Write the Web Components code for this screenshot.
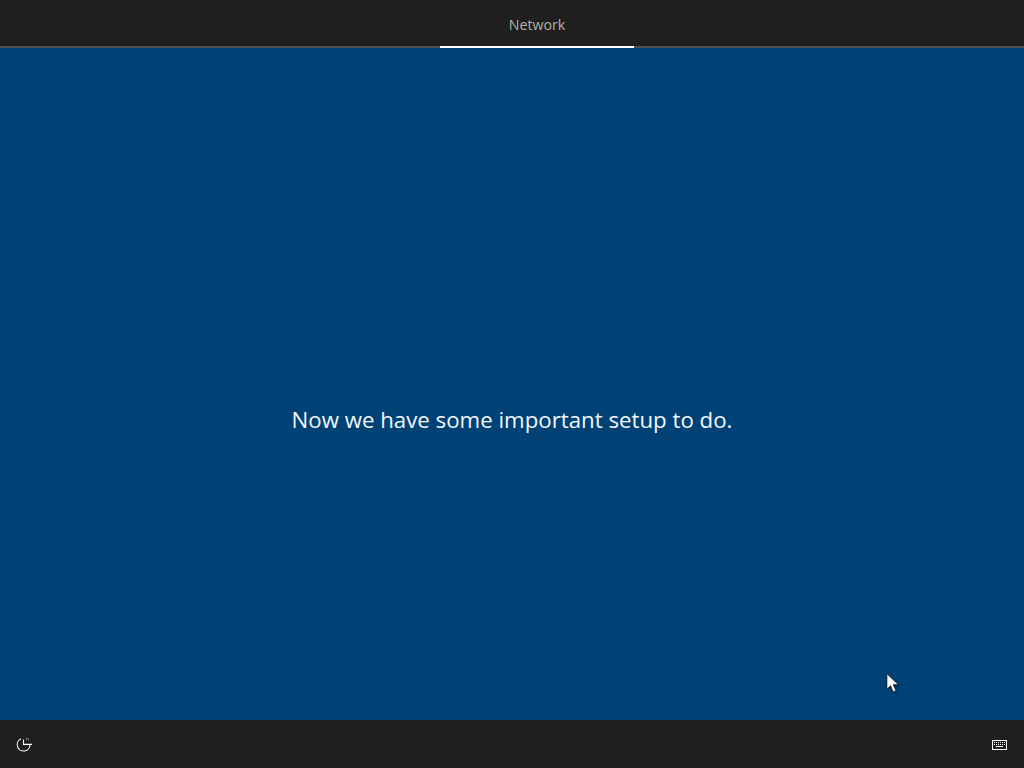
<!DOCTYPE html>
<html>
<head>
<meta charset="utf-8">
<title>Setup</title>
<style>
  html, body { margin: 0; height: 100%; background: #004275; }
  body { font-family: "Open Sans", "Liberation Sans", sans-serif; overflow: hidden; }
</style>
</head>
<body>
<oobe-shell>
  <oobe-header slot="header">
    <oobe-tab>Network</oobe-tab>
  </oobe-header>
  <oobe-message>Now we have some important setup to do.</oobe-message>
  <oobe-footer slot="footer"></oobe-footer>
  <oobe-cursor slot="cursor"></oobe-cursor>
</oobe-shell>

<script>
class OobeShell extends HTMLElement {
  connectedCallback() {
    this.attachShadow({ mode: "open" });
    this.shadowRoot.innerHTML = `
      <style>
        :host {
          display: flex;
          flex-direction: column;
          position: relative;
          width: 100%;
          height: 768px;
          background: #004275;
        }
        main {
          flex: 1;
          display: flex;
          min-height: 0;
        }
      </style>
      <slot name="header"></slot>
      <main><slot></slot></main>
      <slot name="footer"></slot>
      <slot name="cursor"></slot>
    `;
  }
}

class OobeHeader extends HTMLElement {
  connectedCallback() {
    this.attachShadow({ mode: "open" });
    this.shadowRoot.innerHTML = `
      <style>
        :host {
          display: flex;
          height: 48px;
          box-sizing: border-box;
          padding-left: 440px;
          background: #1f1f1f;
          border-bottom: 2px solid #4f4f4f;
        }
      </style>
      <slot></slot>
    `;
  }
}

class OobeTab extends HTMLElement {
  connectedCallback() {
    this.attachShadow({ mode: "open" });
    this.shadowRoot.innerHTML = `
      <style>
        :host {
          display: flex;
          align-items: center;
          justify-content: center;
          width: 194px;
          height: 48px;
          box-sizing: border-box;
          padding-top: 2px;
          border-bottom: 2px solid #fff;
          color: #b0b0b0;
          font-size: 14.2px;
        }
      </style>
      <slot></slot>
    `;
  }
}

class OobeMessage extends HTMLElement {
  connectedCallback() {
    this.attachShadow({ mode: "open" });
    this.shadowRoot.innerHTML = `
      <style>
        :host {
          flex: 1;
          display: flex;
          align-items: center;
          justify-content: center;
          padding-top: 70px;
          color: #f2f6fa;
          font-size: 22.25px;
        }
      </style>
      <slot></slot>
    `;
  }
}

class OobeFooter extends HTMLElement {
  connectedCallback() {
    this.attachShadow({ mode: "open" });
    this.shadowRoot.innerHTML = `
      <style>
        :host {
          display: flex;
          align-items: center;
          justify-content: space-between;
          height: 48px;
          padding: 2px 17px 0 16px;
          box-sizing: border-box;
          background: #1f1f1f;
        }
        svg { display: block; }
      </style>
      <!-- ease of access -->
      <svg width="16" height="16" viewBox="0 0 16 16" fill="none" stroke="#fff" stroke-width="1.1">
        <path d="M5 1.8A6.4 6.4 0 1 0 14 7.4"/>
        <path d="M7.5 2.5V7.4H16"/>
        <path d="M10.4 1.5L12.6 3" stroke-dasharray="1 1"/>
      </svg>
      <!-- keyboard -->
      <svg width="15" height="10" viewBox="0 0 15 10" fill="none" stroke="#fff" shape-rendering="crispEdges">
        <rect x="0.5" y="0.5" width="14" height="9"/>
        <path d="M2 2.5h11M2 4.5h11" stroke-dasharray="1 1"/>
        <path d="M4 6.5h7"/>
      </svg>
    `;
  }
}

class OobeCursor extends HTMLElement {
  connectedCallback() {
    this.attachShadow({ mode: "open" });
    this.shadowRoot.innerHTML = `
      <style>
        :host {
          position: absolute;
          left: 886px;
          top: 673px;
          width: 14px;
          height: 21px;
        }
        svg { display: block; filter: drop-shadow(1px 1px 1px rgba(0,0,0,.45)); }
      </style>
      <svg width="14" height="21" viewBox="0 0 14 21">
        <path d="M1 1v15l3.6-3.4 2.6 6.2 2.6-1.1-2.6-6.1h5z" fill="#fff" stroke="#1a1a1a" stroke-width=".6"/>
      </svg>
    `;
  }
}

customElements.define("oobe-shell", OobeShell);
customElements.define("oobe-header", OobeHeader);
customElements.define("oobe-tab", OobeTab);
customElements.define("oobe-message", OobeMessage);
customElements.define("oobe-footer", OobeFooter);
customElements.define("oobe-cursor", OobeCursor);
</script>
</body>
</html>
